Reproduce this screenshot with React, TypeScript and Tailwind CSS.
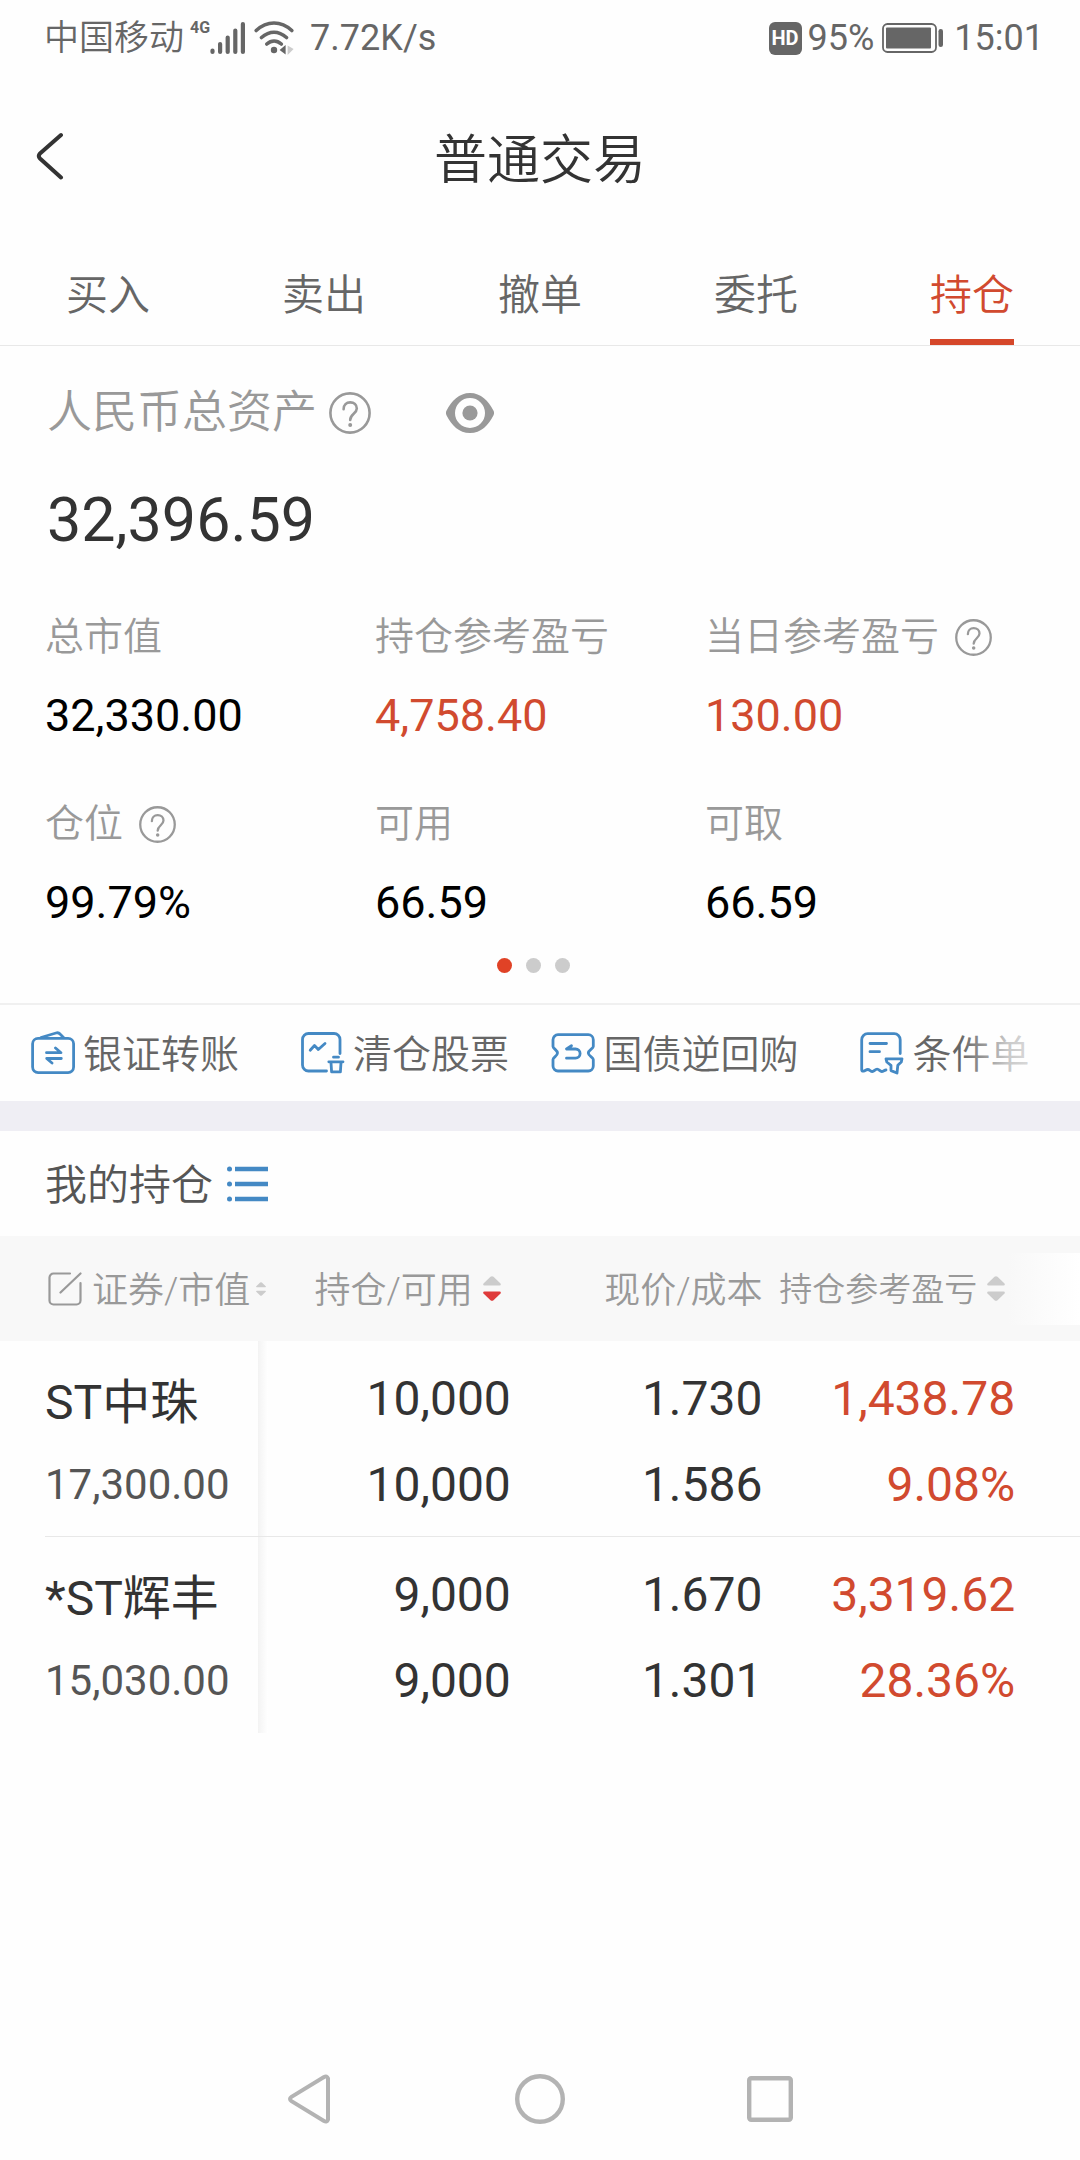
import React, { useState } from 'react';
import { clsx } from 'clsx';

const tabs = ['买入', '卖出', '撤单', '委托', '持仓'];

const stats = [
  { label: '总市值', value: '32,330.00' },
  { label: '持仓参考盈亏', value: '4,758.40', up: true },
  { label: '当日参考盈亏', value: '130.00', up: true, help: true },
  { label: '仓位', value: '99.79%', help: true },
  { label: '可用', value: '66.59' },
  { label: '可取', value: '66.59' },
];

const holdings = [
  {
    name: 'ST中珠',
    marketValue: '17,300.00',
    held: '10,000',
    available: '10,000',
    price: '1.730',
    cost: '1.586',
    profit: '1,438.78',
    rate: '9.08%',
  },
  {
    name: '*ST辉丰',
    marketValue: '15,030.00',
    held: '9,000',
    available: '9,000',
    price: '1.670',
    cost: '1.301',
    profit: '3,319.62',
    rate: '28.36%',
  },
];

const HelpIcon = ({ className }: { className?: string }) => (
  <svg viewBox="0 0 42 42" fill="none" stroke="currentColor" strokeWidth="2.6" className={className}>
    <circle cx="21" cy="21" r="19.6" />
    <path d="M14.6 17.2c0-4.2 2.8-6.8 6.6-6.8s6.6 2.4 6.6 6.2c0 5-6.6 5.6-6.6 11.4" strokeLinecap="round" />
    <circle cx="21.2" cy="33" r="2" fill="currentColor" stroke="none" />
  </svg>
);

const EyeIcon = () => (
  <svg viewBox="0 0 48 40" className="h-10 w-12" fill="currentColor">
    <path
      fillRule="evenodd"
      d="M24 0C35 0 42.5 8 47.4 17.6a5 5 0 0 1 0 4.8C42.5 32 35 40 24 40S5.5 32 .6 22.4a5 5 0 0 1 0-4.8C5.5 8 13 0 24 0Zm0 5a15 15 0 1 0 0 30 15 15 0 0 0 0-30Z"
    />
    <circle cx="24" cy="20" r="7.6" />
  </svg>
);

const SignalIcon = () => (
  <svg viewBox="0 0 36 34" className="h-[34px] w-9" stroke="currentColor" strokeWidth="4.2" strokeLinecap="round">
    <path d="M2.5 29.5V31M10.1 23V31M17.7 16.5V31M25.3 9.5V31M32.9 3V31" />
  </svg>
);

const WifiIcon = () => (
  <svg viewBox="0 0 40 34" className="h-[34px] w-10" fill="none" stroke="currentColor" strokeWidth="3.6" strokeLinecap="round">
    <path d="M2.2 9.5C13-.5 27-.5 37.8 9.5M7.5 16.5c8-7 17-7 25 0M12.8 23c4.5-4 10-4 14.5 0" />
    <circle cx="20" cy="29" r="3.2" fill="currentColor" stroke="none" />
    <path d="M31.6 24v9.5l-6-4.5z" fill="currentColor" stroke="none" />
    <path d="M33.6 24.5v9.5l6-6z" fill="#ccc" stroke="none" />
  </svg>
);

const BatteryIcon = () => (
  <svg viewBox="0 0 62 30" className="h-[30px] w-[62px]" fill="none">
    <rect x="1" y="1" width="53" height="28" rx="4.5" stroke="currentColor" strokeWidth="1.8" />
    <rect x="4" y="4.5" width="45" height="21" rx="1" fill="currentColor" />
    <rect x="56.5" y="6" width="4.5" height="18" rx="2.2" fill="currentColor" />
  </svg>
);

const QuickIcon = ({ children }: { children: React.ReactNode }) => (
  <svg
    viewBox="0 0 44 44"
    className="h-11 w-11 shrink-0 text-[#4489c4]"
    fill="none"
    stroke="currentColor"
    strokeWidth="2.8"
    strokeLinecap="round"
    strokeLinejoin="round"
  >
    {children}
  </svg>
);

const quickLinks = [
  {
    label: '银证转账',
    icon: (
      <QuickIcon>
        <rect x="1.6" y="7.3" width="41" height="34.3" rx="5.5" />
        <path d="M10 6.5 25 2q2.5-.8 4 1l3.5 3.5M15.5 21.7H30L24.5 17M30.3 27.5H15.7L21 32" />
      </QuickIcon>
    ),
  },
  {
    label: '清仓股票',
    icon: (
      <QuickIcon>
        <path d="M39 22.5V8.5a6 6 0 0 0-6-6H7.5a6 6 0 0 0-6 6V34a6 6 0 0 0 6 6H25.5" />
        <path d="m9.2 19.3 4.3-4.8 3.8 4L24 12.5M27.8 30.8H42M32.5 26.2H37.5M30 31.5l.6 9.3h8.8l.6-9.3" />
      </QuickIcon>
    ),
  },
  {
    label: '国债逆回购',
    icon: (
      <QuickIcon>
        <path d="M7 3.7H37.3a5 5 0 0 1 5 5V15.5c0 2-5 3.5-5 6.5s5 4.5 5 6.5V35a5 5 0 0 1-5 5H7a5 5 0 0 1-5-5V28.5c0-2 4.5-3.5 4.5-6.5S2 17.5 2 15.5V8.7a5 5 0 0 1 5-5Z" />
        <path d="M20.5 14.8 15.5 18H24.5a4.6 4.6 0 0 1 0 9.2H15.5" />
      </QuickIcon>
    ),
  },
  {
    label: '条件单',
    icon: (
      <QuickIcon>
        <path d="M40.2 22.5V8.7a6 6 0 0 0-6-6H7.7a6 6 0 0 0-6 6V38.5q0 2 1.8 1.6c2-.4 2.5-1.6 4.3-1.6 2 0 2.7 2 4.6 2s2.5-2.3 4.7-2.3 2.7 2.3 4.6 2.3 2.5-1.5 4.3-1.5" />
        <path d="M10 12.5H26.5M10 20.7H19.5M26 27.8H42L41.3 31 37.8 34.3 37 42 31 39.6V34.3L26.8 31Z" />
      </QuickIcon>
    ),
  },
];

const SortIcon = ({ className, active }: { className: string; active?: boolean }) => (
  <svg viewBox="0 0 18 25" className={clsx('shrink-0', className)}>
    <path d="M7.5.8q1.5-1.3 3 0l7 6.7q1 2-1 2H1.5q-2 0-1-2Z" fill="#ccc" />
    <path d="M7.5 24.2q1.5 1.3 3 0l7-6.7q1-2-1-2H1.5q-2 0-1 2Z" fill={active ? '#df3b3b' : '#ccc'} />
  </svg>
);

const EditIcon = () => (
  <svg viewBox="0 0 34 34" className="h-[34px] w-[34px] shrink-0" fill="none" stroke="currentColor" strokeWidth="2.2" strokeLinecap="round">
    <path d="M22 1.5H5.5a4 4 0 0 0-4 4V28.5a4 4 0 0 0 4 4H28.5a4 4 0 0 0 4-4V11M32.5 1.5 12.5 20.5" />
  </svg>
);

const ListIcon = () => (
  <svg viewBox="0 0 42 36" className="h-9 w-[42px]" fill="#4489c4">
    <circle cx="2.5" cy="3" r="2.5" />
    <circle cx="2.5" cy="18" r="2.5" />
    <circle cx="2.5" cy="33" r="2.5" />
    <path d="M8 .8h33v4.4H8zM8 15.8h33v4.4H8zM8 30.8h33v4.4H8z" />
  </svg>
);

const StatusBar = () => (
  <div className="flex h-[76px] items-center justify-between pr-9 pl-11 text-4xl text-[#666]">
    <div className="flex items-center">
      <span className="pt-0.5 text-[35px] font-[350]">中国移动</span>
      <span className="ml-1.5 self-start text-base leading-5 font-bold">4G</span>
      <SignalIcon />
      <span className="ml-2">
        <WifiIcon />
      </span>
      <span className="ml-4">7.72K/s</span>
    </div>
    <div className="flex items-center">
      <span className="flex h-[33px] w-[33px] items-center justify-center rounded-md bg-[#666] text-xl font-bold text-white">
        HD
      </span>
      <span className="ml-1.5">95%</span>
      <span className="ml-2">
        <BatteryIcon />
      </span>
      <span className="ml-2.5">15:01</span>
    </div>
  </div>
);

const HoldingsTable = () => (
  <div className="relative">
    <table className="w-full table-fixed border-collapse text-right text-5xl text-[#333]">
      <colgroup>
        <col className="w-[24.8%]" />
        <col className="w-[22.5%]" />
        <col className="w-[23.3%]" />
        <col className="w-[23.4%]" />
        <col />
      </colgroup>
      <thead className="bg-[#f8f8f8] text-4xl text-[#999]">
        <tr className="h-[105px]">
          <th className="p-0 font-[350]">
            <button className="flex items-center pl-12 whitespace-nowrap">
              <EditIcon />
              <span className="ml-2.5 pt-1">证券/市值</span>
              <SortIcon className="ml-1.5 h-3.5 w-2.5" />
            </button>
          </th>
          <th className="p-0 font-[350]">
            <button className="ml-auto flex items-center pr-2.5 whitespace-nowrap">
              <span className="pt-1">持仓/可用</span>
              <SortIcon className="ml-2.5 h-[25px] w-[18px]" active />
            </button>
          </th>
          <th className="p-0 pt-1 font-[350]">现价/成本</th>
          <th className="p-0 font-[350]">
            <button className="ml-auto flex items-center pr-2.5 text-[33px] whitespace-nowrap">
              <span className="pt-1">持仓参考盈亏</span>
              <SortIcon className="ml-2.5 h-[25px] w-[18px]" />
            </button>
          </th>
          <th className="p-0" />
        </tr>
      </thead>
      <tbody>
        {holdings.map((row, i) => {
          const line = i < holdings.length - 1 ? 'border-[#e8e8e8]' : 'border-transparent';
          return (
            <tr key={row.name}>
              <td className="p-0 text-left">
                <div className="flex">
                  <div className={clsx('ml-[45px] flex-1 border-b pt-[19px] pb-3', line)}>
                    <div className="leading-[86px]">{row.name}</div>
                    <div className="text-[42px] leading-[78px] text-[#555]">{row.marketValue}</div>
                  </div>
                  <div className={clsx('w-2.5 border-b bg-linear-to-r from-[#f3f3f3] to-white', line)} />
                </div>
              </td>
              <td className="p-0">
                <div className={clsx('border-b pt-[15px] pb-2 leading-[86px]', line)}>
                  <div>{row.held}</div>
                  <div>{row.available}</div>
                </div>
              </td>
              <td className="p-0">
                <div className={clsx('border-b pt-[15px] pb-2 leading-[86px]', line)}>
                  <div>{row.price}</div>
                  <div>{row.cost}</div>
                </div>
              </td>
              <td className="p-0">
                <div className={clsx('border-b pt-[15px] pb-2 leading-[86px] text-[#d14a2f]', line)}>
                  <div>{row.profit}</div>
                  <div>{row.rate}</div>
                </div>
              </td>
              <td className="p-0 align-bottom">
                <div className={clsx('border-b', line)} />
              </td>
            </tr>
          );
        })}
      </tbody>
    </table>
    <div className="absolute top-[17px] right-0 h-[72px] w-[72px] bg-linear-to-r from-[#f8f8f8] to-white" />
  </div>
);

const App = () => {
  const [activeTab, setActiveTab] = useState('持仓');

  return (
    <div className="flex min-h-screen flex-col bg-[#fefefe] font-[Roboto,'Noto_Sans_CJK_SC',sans-serif] text-[#333]">
      <StatusBar />

      <header className="grid h-[164px] grid-cols-[1fr_auto_1fr] items-center">
        <button aria-label="返回" className="mb-1 ml-9 w-7">
          <svg viewBox="0 0 28 48" className="h-12 w-7" fill="none" stroke="currentColor" strokeWidth="4" strokeLinecap="round">
            <path d="M25 3 4 21.5q-2.5 2.5 0 5L25 45.5" />
          </svg>
        </button>
        <h1 className="pt-2 text-[53px] font-[350]">普通交易</h1>
      </header>

      <nav className="grid grid-cols-5 border-b border-[#e8e8e8]">
        {tabs.map((tab) => (
          <button
            key={tab}
            onClick={() => setActiveTab(tab)}
            className={clsx(
              'flex flex-col items-center pt-[26px] text-[42px] leading-[60px] font-[350]',
              tab === activeTab ? 'text-[#d14a2f]' : 'text-[#666]'
            )}
          >
            {tab}
            <span className={clsx('mt-[13px] h-1.5 w-21', tab === activeTab && 'bg-[#d5472a]')} />
          </button>
        ))}
      </nav>

      <section className="px-[45px] pt-[34px] pb-[30px]">
        <div className="px-0.5">
          <div className="flex items-center text-[#999]">
            <h2 className="text-[45px] leading-[66px] font-[350]">人民币总资产</h2>
            <button aria-label="总资产说明" className="ml-3">
              <HelpIcon className="h-[42px] w-[42px]" />
            </button>
            <button aria-label="隐藏金额" className="ml-[75px]">
              <EyeIcon />
            </button>
          </div>
          <div className="mt-8 text-[61px] leading-[84px]">32,396.59</div>
        </div>

        <dl className="mt-[46px] grid grid-cols-3 gap-y-[46px]">
          {stats.map((item) => (
            <div key={item.label}>
              <dt className="flex items-center text-[39px] leading-[58px] font-[350] whitespace-nowrap text-[#999]">
                {item.label}
                {item.help && (
                  <button aria-label={`${item.label}说明`} className="ml-4">
                    <HelpIcon className="h-[37px] w-[37px]" />
                  </button>
                )}
              </dt>
              <dd className={clsx('mt-[17px] text-[45px] leading-[66px]', item.up ? 'text-[#d14a2f]' : 'text-black')}>
                {item.value}
              </dd>
            </div>
          ))}
        </dl>

        <div className="mt-[22px] flex justify-center">
          <span className="mr-3.5 h-[15px] w-[15px] rounded-full bg-[#e04226]" />
          <span className="mr-3.5 h-[15px] w-[15px] rounded-full bg-[#ccc]" />
          <span className="mr-3.5 h-[15px] w-[15px] rounded-full bg-[#ccc]" />
        </div>
      </section>

      <div className="relative grid grid-cols-4 border-t-2 border-[#f0f0f0]">
        {quickLinks.map((link) => (
          <a
            key={link.label}
            href="#"
            className="flex h-24 items-center justify-center gap-2 text-[39px] font-[350] whitespace-nowrap text-[#666]"
          >
            {link.icon}
            <span className="pt-1">{link.label}</span>
          </a>
        ))}
        <div className="absolute inset-y-0 right-0 w-30 bg-linear-to-r from-[#fefefe]/0 via-[#fefefe]/65 via-40% to-[#fefefe]" />
      </div>

      <div className="h-[30px] bg-[#efeef4]" />

      <div className="flex h-[105px] items-center px-[45px] text-[#555]">
        <h2 className="pt-1 text-[42px] font-[350]">我的持仓</h2>
        <button aria-label="切换列表" className="ml-3.5">
          <ListIcon />
        </button>
      </div>

      <HoldingsTable />

      <nav className="mt-auto flex h-[122px] justify-center text-[#b3b3b3]">
        <button aria-label="后退" className="flex w-[230px] items-center justify-center">
          <svg viewBox="0 0 50 50" className="h-[50px] w-[50px]" fill="none" stroke="currentColor" strokeWidth="4">
            <path d="M43 4.5V45.5q-1 3-4 1.5L6.5 27.2q-3-2.2 0-4.4L39 3q3-1.5 4 1.5Z" />
          </svg>
        </button>
        <button aria-label="主页" className="flex w-[230px] items-center justify-center">
          <svg viewBox="0 0 50 50" className="h-[50px] w-[50px]" fill="none" stroke="currentColor" strokeWidth="4.4">
            <circle cx="25" cy="25" r="22.8" />
          </svg>
        </button>
        <button aria-label="最近任务" className="flex w-[230px] items-center justify-center">
          <svg viewBox="0 0 50 50" className="h-[50px] w-[50px]" fill="none" stroke="currentColor" strokeWidth="4.4">
            <rect x="4.2" y="4.2" width="41.6" height="41.6" rx="2" />
          </svg>
        </button>
      </nav>
    </div>
  );
};

export default App;
